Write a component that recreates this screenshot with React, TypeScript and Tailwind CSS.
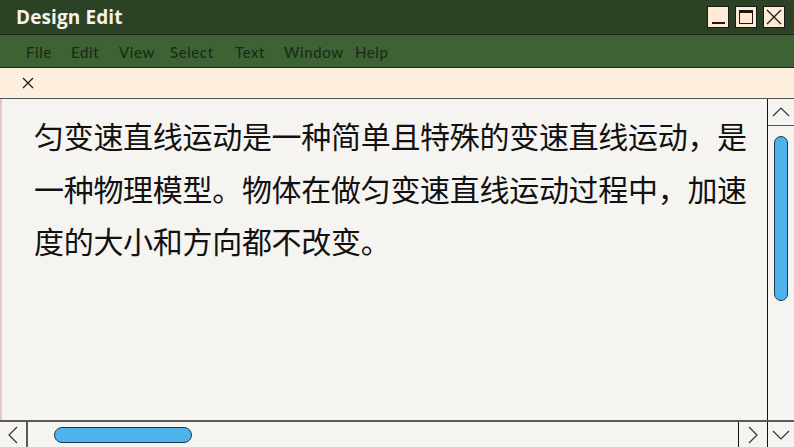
import React from 'react';

// menu labels with the slot width each one takes in the bar
const menuItems: [string, string][] = [
  ['File', 'w-[45px]'],
  ['Edit', 'w-[48px]'],
  ['View', 'w-[51px]'],
  ['Select', 'w-[65px]'],
  ['Text', 'w-[49px]'],
  ['Window', 'w-[71px]'],
  ['Help', 'w-[40px]'],
];

function TitleButton({ children }: { children: React.ReactNode }) {
  return (
    <div className="w-[22px] h-[22px] bg-[#fdebd6] border border-[#1a1a1a] flex items-center justify-center">
      {children}
    </div>
  );
}

export default function App() {
  return (
    <div className="w-[794px] h-[447px] flex flex-col overflow-hidden bg-[#f6f4f1]" style={{ fontFamily: '"Lato", "Noto Sans", sans-serif' }}>
      {/* Title bar */}
      <div className="h-[35px] bg-[#2c4224] flex items-center justify-between pl-[16px] pr-[9px] border-b border-[#1c2a17]">
        <span className="text-[#f7f3ea] text-[19px] font-bold tracking-[0.1px]" style={{ fontFamily: '"Open Sans", sans-serif' }}>Design Edit</span>
        <div className="flex gap-[6px]">
          <TitleButton>
            <div className="w-[13px] h-[2px] bg-[#1a1a1a] mt-[12px]" />
          </TitleButton>
          <TitleButton>
            <div className="w-[14px] h-[14px] border border-[#1a1a1a] border-t-[3px]" />
          </TitleButton>
          <TitleButton>
            <svg width="16" height="16" viewBox="0 0 16 16" stroke="#1a1a1a" strokeWidth="1.3">
              <path d="M1 1 L15 15 M15 1 L1 15" />
            </svg>
          </TitleButton>
        </div>
      </div>

      {/* Menu bar */}
      <div className="h-[33px] bg-[#3d6234] flex items-center pl-[26px] pt-[3px] border-b border-[#1c2a17]">
        {menuItems.map(([label, w]) => (
          <span key={label} className={`${w} text-[#1a2716] text-[15px] tracking-[0.6px]`}>
            {label}
          </span>
        ))}
      </div>

      {/* Tab strip */}
      <div className="h-[31px] bg-[#fdeedd] flex items-center pl-[21px] border-b border-[#555]">
        <svg width="14" height="14" viewBox="0 0 14 14" stroke="#1a1a1a" strokeWidth="1.2">
          <path d="M2 2 L12 12 M12 2 L2 12" />
        </svg>
      </div>

      {/* Content area */}
      <div className="flex-1 flex min-h-0">
        <div className="flex-1 border-l-2 border-[#e8c9c4] pl-[32px] pr-[10px] pt-[10px]">
          <p
            className="text-[30px] leading-[52.5px] text-[#111] tracking-[-0.3px]"
            style={{ fontFamily: '"Noto Sans CJK SC", sans-serif' }}
          >
            匀变速直线运动是一种简单且特殊的变速直线运动，是一种物理模型。物体在做匀变速直线运动过程中，加速度的大小和方向都不改变。
          </p>
        </div>
        <div className="w-[27px] border-l border-[#111] flex flex-col">
          <div className="h-[27px] border-b border-[#555] flex items-center justify-center">
            <svg width="18" height="10" viewBox="0 0 18 10" fill="none" stroke="#333" strokeWidth="1.2">
              <path d="M1 9 L9 1 L17 9" />
            </svg>
          </div>
          <div className="flex-1 pt-[10px] flex justify-center">
            <div className="w-[14px] h-[165px] rounded-full bg-[#4cb3ec] border border-[#1e3a4a]" />
          </div>
        </div>
      </div>

      {/* Bottom scrollbar */}
      <div className="h-[27px] border-t-2 border-[#5a5a5a] flex">
        <div className="w-[28px] border-r-2 border-[#5a5a5a] flex items-center justify-center">
          <svg width="10" height="18" viewBox="0 0 10 18" fill="none" stroke="#333" strokeWidth="1.2">
            <path d="M9 1 L1 9 L9 17" />
          </svg>
        </div>
        <div className="flex-1 flex items-center pl-[26px]">
          <div className="w-[138px] h-[16px] rounded-full bg-[#4cb3ec] border border-[#1e3a4a]" />
        </div>
        <div className="w-[29px] border-l border-[#111] flex items-center justify-center">
          <svg width="10" height="18" viewBox="0 0 10 18" fill="none" stroke="#333" strokeWidth="1.2">
            <path d="M1 1 L9 9 L1 17" />
          </svg>
        </div>
        <div className="w-[27px] border-l border-[#111] flex items-center justify-center">
          <svg width="18" height="10" viewBox="0 0 18 10" fill="none" stroke="#333" strokeWidth="1.2">
            <path d="M1 1 L9 9 L17 1" />
          </svg>
        </div>
      </div>
    </div>
  );
}
